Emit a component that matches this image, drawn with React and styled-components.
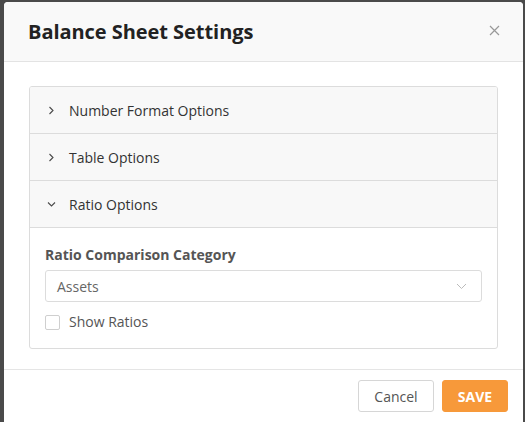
import React from "react";
import styled, { createGlobalStyle } from "styled-components";

const Global = createGlobalStyle`
  html, body { margin: 0; padding: 0; }
  body {
    background: #4a4a4a;
    font-family: "Open Sans", "Liberation Sans", sans-serif;
    overflow: hidden;
  }
`;

const Backdrop = styled.div`
  height: 422px;
  padding: 2px 2px 0 4px;
  box-sizing: border-box;
`;

const Modal = styled.div`
  width: 519px;
  height: 430px;
  background: #fff;
  border-radius: 4px;
  overflow: hidden;
  display: flex;
  flex-direction: column;
`;

const Header = styled.div`
  height: 60px;
  box-sizing: border-box;
  background: #f9f9f9;
  border-bottom: 1px solid #e3e3e3;
  display: flex;
  align-items: center;
  justify-content: space-between;
  padding: 0 22px 0 24px;
`;

const Title = styled.h1`
  margin: 0;
  font-size: 20px;
  font-weight: 700;
  color: #222;
  letter-spacing: -0.05px;
`;

const Close = styled.button`
  border: 0;
  background: none;
  padding: 0;
  width: 14px;
  height: 14px;
  display: flex;
  align-items: center;
  justify-content: center;
  margin-top: -2px;
`;

const Body = styled.div`
  padding: 24px 25px 20px 25px;
  border-bottom: 1px solid #e5e5e5;
`;

const Accordion = styled.div`
  border: 1px solid #dcdcdc;
  border-radius: 3px;
  overflow: hidden;
`;

const SectionHeader = styled.div`
  height: 46px;
  background: #f8f8f8;
  display: flex;
  align-items: center;
  padding-left: 17px;
  gap: 13px;
  font-size: 14px;
  color: #333;
  border-top: ${(p) => (p.$first ? "none" : "1px solid #dcdcdc")};
`;

const ChevronBox = styled.span`
  width: 9px;
  display: flex;
  justify-content: center;
  align-items: center;
`;

const SectionContent = styled.div`
  border-top: 1px solid #dcdcdc;
  padding: 17px 15px 17px 15px;
  display: flex;
  flex-direction: column;
`;

const Label = styled.div`
  font-size: 14px;
  font-weight: 700;
  color: #555;
  line-height: 20px;
  margin-bottom: 5px;
`;

const Select = styled.div`
  height: 32px;
  box-sizing: border-box;
  border: 1px solid #dcdcdc;
  border-radius: 3px;
  display: flex;
  align-items: center;
  justify-content: space-between;
  padding: 0 14px 0 11px;
  font-size: 14px;
  color: #666;
`;

const CheckRow = styled.label`
  display: flex;
  align-items: center;
  gap: 9px;
  margin-top: 11px;
  font-size: 14px;
  color: #555;
  line-height: 18px;
`;

const Box = styled.span`
  width: 15px;
  height: 15px;
  box-sizing: border-box;
  border: 1px solid #cfcfcf;
  border-radius: 2px;
  background: #fff;
`;

const Footer = styled.div`
  display: flex;
  justify-content: flex-end;
  gap: 8px;
  padding: 10px 15px 0 0;
`;

const Button = styled.button`
  height: 32px;
  box-sizing: border-box;
  border-radius: 3px;
  font-family: "Open Sans", "Liberation Sans", sans-serif;
  font-size: 14px;
  padding: 0;
  width: ${(p) => (p.$primary ? "66px" : "76px")};
  border: 1px solid ${(p) => (p.$primary ? "#f7993a" : "#d6d6d6")};
  background: ${(p) => (p.$primary ? "#f7993a" : "#fff")};
  color: ${(p) => (p.$primary ? "#fff" : "#555")};
  font-weight: ${(p) => (p.$primary ? 700 : 400)};
`;

const Chevron = ({ open }) => (
  <svg width="9" height="9" viewBox="0 0 9 9">
    <path
      d={open ? "M1 2.5 L4.5 6 L8 2.5" : "M2.5 1 L6 4.5 L2.5 8"}
      fill="none"
      stroke="#4a4a4a"
      strokeWidth="1.1"
    />
  </svg>
);

const Section = ({ title, open, first, children }) => (
  <>
    <SectionHeader $first={first}>
      <ChevronBox>
        <Chevron open={open} />
      </ChevronBox>
      {title}
    </SectionHeader>
    {open && <SectionContent>{children}</SectionContent>}
  </>
);

export default function App() {
  return (
    <>
      <Global />
      <Backdrop>
        <Modal>
          <Header>
            <Title>Balance Sheet Settings</Title>
            <Close aria-label="close">
              <svg width="11" height="11" viewBox="0 0 11 11">
                <path d="M1 1 L10 10 M10 1 L1 10" stroke="#999" strokeWidth="1.2" />
              </svg>
            </Close>
          </Header>
          <Body>
            <Accordion>
              <Section title="Number Format Options" first />
              <Section title="Table Options" />
              <Section title="Ratio Options" open>
                <Label>Ratio Comparison Category</Label>
                <Select>
                  Assets
                  <svg width="11" height="7" viewBox="0 0 11 7">
                    <path d="M1 1 L5.5 5.5 L10 1" fill="none" stroke="#bbb" strokeWidth="1" />
                  </svg>
                </Select>
                <CheckRow>
                  <Box />
                  Show Ratios
                </CheckRow>
              </Section>
            </Accordion>
          </Body>
          <Footer>
            <Button>Cancel</Button>
            <Button $primary>SAVE</Button>
          </Footer>
        </Modal>
      </Backdrop>
    </>
  );
}
